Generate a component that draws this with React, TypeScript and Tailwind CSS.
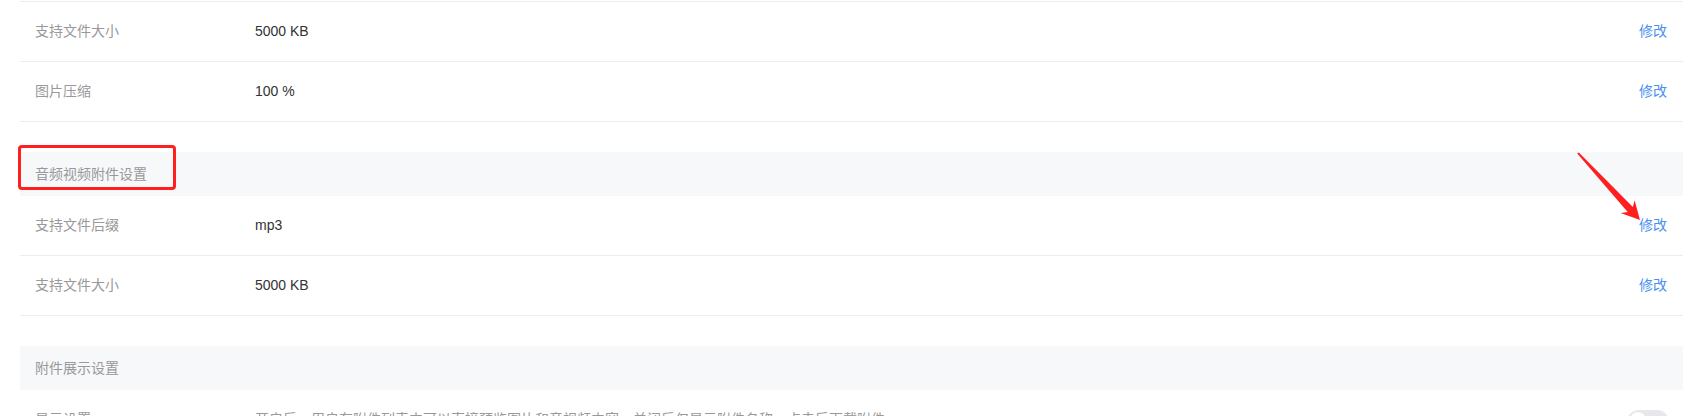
import React from 'react';

type Row = { label: string; value: string; toggle?: boolean };

const Item: React.FC<{ row: Row }> = ({ row }) => (
    <div className="flex items-center h-[60px] border-b border-[#ebedf0] pl-[15px] pr-[16px]">
        <div className="w-[220px] shrink-0 text-[#999]">{row.label}</div>
        <div className={row.toggle ? 'flex-1 text-[#999]' : 'flex-1 text-[#333]'}>{row.value}</div>
        {row.toggle ? (
            <div className="w-[40px] h-[20px] rounded-full bg-[#e6e8eb] p-[2px] mr-[-1px]">
                <div className="w-[16px] h-[16px] rounded-full bg-white shadow-sm"></div>
            </div>
        ) : (
            <button className="text-[#4a90f0] cursor-pointer">修改</button>
        )}
    </div>
);

const SectionHead: React.FC<{ title: string }> = ({ title }) => (
    <div className="mt-[30px] h-[44px] bg-[#f7f8fa] flex items-center pl-[15px] text-[#999]">{title}</div>
);

const App: React.FC = () => {
    return (
        <div
            className="relative w-[1694px] h-[416px] overflow-hidden bg-white text-[14px]"
            style={{ fontFamily: '"Liberation Sans", "Noto Sans CJK SC", sans-serif' }}
        >
            <div className="pl-5 pr-[11px] pt-px">
                <div className="border-t border-[#ebedf0]"></div>
                <Item row={{ label: '支持文件大小', value: '5000 KB' }} />
                <Item row={{ label: '图片压缩', value: '100 %' }} />

                <SectionHead title="音频视频附件设置" />
                <Item row={{ label: '支持文件后缀', value: 'mp3' }} />
                <Item row={{ label: '支持文件大小', value: '5000 KB' }} />

                <SectionHead title="附件展示设置" />
                <Item
                    row={{
                        label: '显示设置',
                        value: '开启后，用户在附件列表中可以直接预览图片和音视频内容，关闭后仅显示附件名称，点击后下载附件',
                        toggle: true,
                    }}
                />
            </div>

            {/* annotations */}
            <div className="absolute left-[18px] top-[145px] w-[158px] h-[45px] border-[3px] border-[#ff1f1f] rounded-[4px] pointer-events-none"></div>
            <svg className="absolute left-0 top-0 pointer-events-none" width="1694" height="416">
                <polygon
                    points="1578.8,152.4 1632.9,207.1 1634.6,200.2 1640,220 1620.6,213 1627.7,211.9 1577.2,153.6"
                    fill="#ff1f1f"
                />
            </svg>
        </div>
    );
};

export default App;
